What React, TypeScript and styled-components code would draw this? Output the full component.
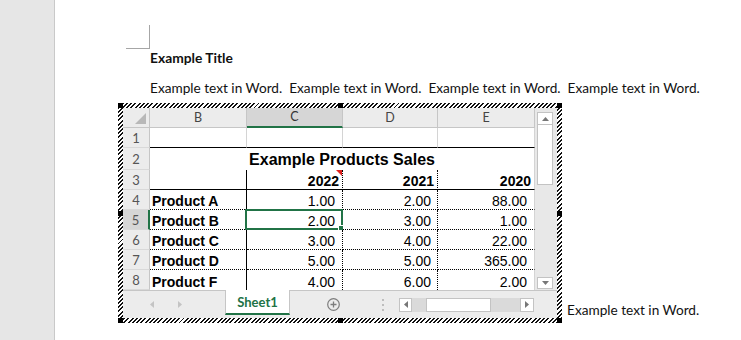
import React from 'react'
import styled, { createGlobalStyle } from 'styled-components'

const GlobalStyle = createGlobalStyle`
  html, body {
    margin: 0;
    padding: 0;
    background: #ffffff;
  }
  body {
    font-family: Lato, "Liberation Sans", sans-serif;
  }
`

const GREEN = '#217346'

type Line = 'none' | 'grid' | 'solid' | 'dot'

const lineCss = (l: Line) => {
  if (l === 'none') return 'none'
  if (l === 'solid') return '1px solid #000'
  if (l === 'dot') return '1px dotted #000'
  return '1px solid #d4d4d4'
}

const Screen = styled.div`
  display: flex;
  width: 741px;
  height: 340px;
  overflow: hidden;
`

const Gutter = styled.div`
  width: 54px;
  flex: none;
  background: #e6e6e6;
  border-right: 1px solid #c9c9c9;
`

const Page = styled.div`
  flex: 1;
  background: #fff;
  overflow: hidden;
`

const Column = styled.div`
  display: flex;
  flex-direction: column;
  align-items: flex-start;
  padding-left: 95px;
`

const MarginMark = styled.div`
  width: 23px;
  height: 23px;
  margin-top: 25px;
  margin-left: -24px;
  border-right: 1px solid #a6a6a6;
  border-bottom: 1px solid #a6a6a6;
`

const Title = styled.div`
  font: 700 13.8px/18px Lato, "Liberation Sans", sans-serif;
  color: #111;
`

const BodyText = styled.div`
  margin-top: 12px;
  font: 400 13.65px/18px Lato, "Liberation Sans", sans-serif;
  color: #111;
  white-space: pre;
`

const ObjectLine = styled.div`
  display: flex;
  align-items: flex-end;
  margin-top: 6px;
  margin-left: -32px;
`

const TrailText = styled(BodyText)`
  margin: 0 0 4px 5px;
`

const OleFrame = styled.div`
  position: relative;
  padding: 5px;
  background: repeating-linear-gradient(135deg, #111 0 1.4px, #fff 1.4px 3px);
`

const Handle = styled.div<{ $x: string; $y: string }>`
  position: absolute;
  width: 5px;
  height: 5px;
  background: #000;
  left: ${(p) => p.$x};
  top: ${(p) => p.$y};
`

const Workbook = styled.div`
  width: 434px;
  height: 210px;
  background: #fff;
  display: flex;
  flex-direction: column;
`

const SheetRow = styled.div`
  display: flex;
  height: 182px;
`

const Grid = styled.div`
  display: grid;
  grid-template-columns: 27px 97px 96px 95px 97px;
  grid-template-rows: 20px 20px 22px repeat(6, 20px);
  width: 412px;
`

const Corner = styled.div`
  background: #ececec;
  border-right: 1px solid #c6c6c6;
  border-bottom: 1px solid #c6c6c6;
  display: flex;
  align-items: flex-end;
  justify-content: flex-end;
  padding: 0 3px 3px 0;
`

const CornerTri = styled.div`
  width: 11px;
  height: 11px;
  background: #b8b8b8;
  clip-path: polygon(100% 0, 100% 100%, 0 100%);
`

const ColHead = styled.div<{ $sel?: boolean }>`
  background: ${(p) => (p.$sel ? '#d6d6d6' : '#ececec')};
  border-right: 1px solid #c6c6c6;
  border-bottom: ${(p) => (p.$sel ? `2px solid ${GREEN}` : '1px solid #c6c6c6')};
  display: flex;
  align-items: center;
  justify-content: center;
  font: 400 12.5px/16px Lato, "Liberation Sans", sans-serif;
  color: ${(p) => (p.$sel ? '#333' : '#444')};
`

const RowHead = styled.div<{ $sel?: boolean }>`
  background: ${(p) => (p.$sel ? '#d6d6d6' : '#ececec')};
  border-right: ${(p) => (p.$sel ? `2px solid ${GREEN}` : '1px solid #c6c6c6')};
  border-bottom: 1px solid #d9d9d9;
  display: flex;
  align-items: center;
  justify-content: center;
  font: 400 13px/16px Lato, "Liberation Sans", sans-serif;
  color: #555;
`

const Cell = styled.div<{
  $r?: Line
  $b?: Line
  $align?: 'left' | 'right' | 'center'
  $bold?: boolean
  $pad?: number
  $span?: number
  $size?: number
}>`
  position: relative;
  display: flex;
  align-items: flex-end;
  justify-content: ${(p) =>
    p.$align === 'right' ? 'flex-end' : p.$align === 'center' ? 'center' : 'flex-start'};
  grid-column: span ${(p) => p.$span ?? 1};
  border-right: ${(p) => lineCss(p.$r ?? 'grid')};
  border-bottom: ${(p) => lineCss(p.$b ?? 'grid')};
  padding: 0 ${(p) => p.$pad ?? 3}px 0 ${(p) => (p.$align === 'left' ? 2 : 0)}px;
  font: ${(p) => (p.$bold ? 700 : 400)} ${(p) => p.$size ?? 14}px/16px "Liberation Sans", Arial, sans-serif;
  color: #000;
  white-space: nowrap;
  background: #fff;
`

const TitleCell = styled(Cell)`
  padding-bottom: 1.5px;
  line-height: 18px;
`

const CommentMark = styled.div`
  position: absolute;
  top: 0;
  right: 0;
  width: 6px;
  height: 6px;
  background: #e0201c;
  clip-path: polygon(0 0, 100% 0, 100% 100%);
`

const Selection = styled.div`
  position: absolute;
  left: -2px;
  top: -1px;
  right: -1px;
  bottom: -1px;
  border: 2px solid ${GREEN};
`

const FillHandle = styled.div`
  position: absolute;
  right: -4px;
  bottom: -4px;
  width: 5px;
  height: 5px;
  background: ${GREEN};
  border: 1px solid #fff;
`

const VScroll = styled.div`
  width: 22px;
  background: #e8e8e8;
  display: flex;
  flex-direction: column;
  padding: 4px 4px 1px 2px;
  box-sizing: border-box;
`

const ScrollBtn = styled.div<{ $w?: number; $h?: number }>`
  width: ${(p) => p.$w ?? 16}px;
  height: ${(p) => p.$h ?? 13}px;
  box-sizing: border-box;
  background: #fff;
  border: 1px solid #c3c3c3;
  display: flex;
  align-items: center;
  justify-content: center;
  flex: none;
`

const VThumb = styled.div`
  height: 61px;
  margin-top: -1px;
  background: #fff;
  border: 1px solid #c3c3c3;
  box-sizing: border-box;
`

const Spacer = styled.div`
  flex: 1;
`

const TabBar = styled.div`
  height: 28px;
  box-sizing: border-box;
  border-top: 1px solid #c6c6c6;
  background: #ececec;
  display: flex;
  align-items: center;
`

const NavBox = styled.div`
  width: 102px;
  display: flex;
  align-items: center;
  gap: 24px;
  padding-left: 27px;
  box-sizing: border-box;
`

const SheetTab = styled.div`
  align-self: flex-start;
  margin-top: -1px;
  width: 65px;
  height: 25px;
  box-sizing: border-box;
  background: #fff;
  border-left: 1px solid #c6c6c6;
  border-right: 1px solid #c6c6c6;
  border-bottom: 2px solid ${GREEN};
  display: flex;
  align-items: center;
  justify-content: center;
  font: 700 13px/16px Lato, "Liberation Sans", sans-serif;
  color: ${GREEN};
`

const PlusBtn = styled.div`
  margin-left: 37px;
  width: 13px;
  height: 13px;
  display: flex;
`

const Dots = styled.div`
  margin-left: 42px;
  display: flex;
  flex-direction: column;
  gap: 3px;
`

const Dot = styled.div`
  width: 2px;
  height: 2px;
  background: #bdbdbd;
`

const HScroll = styled.div`
  margin-left: 15px;
  display: flex;
  align-items: center;
`

const HTrack = styled.div`
  width: 108px;
  height: 14px;
  background: #dadada;
  display: flex;
`

const HThumb = styled.div`
  margin-left: 14px;
  width: 65px;
  height: 14px;
  box-sizing: border-box;
  background: #fff;
  border: 1px solid #c3c3c3;
`

const Tri = ({ dir, color = '#777' }: { dir: 'up' | 'down' | 'left' | 'right'; color?: string }) => {
  const pts = {
    up: '0,4 3.5,0 7,4',
    down: '0,0 7,0 3.5,4',
    left: '4,0 4,7 0,3.5',
    right: '0,0 4,3.5 0,7',
  }[dir]
  const vertical = dir === 'up' || dir === 'down'
  return (
    <svg width={vertical ? 7 : 4} height={vertical ? 4 : 7} viewBox={vertical ? '0 0 7 4' : '0 0 4 7'}>
      <polygon points={pts} fill={color} />
    </svg>
  )
}

const cols = ['B', 'C', 'D', 'E']

const products: [string, string, string, string][] = [
  ['Product A', '1.00', '2.00', '88.00'],
  ['Product B', '2.00', '3.00', '1.00'],
  ['Product C', '3.00', '4.00', '22.00'],
  ['Product D', '5.00', '5.00', '365.00'],
  ['Product F', '4.00', '6.00', '2.00'],
]

const Sheet: React.FC = () => (
  <Grid>
    <Corner>
      <CornerTri />
    </Corner>
    {cols.map((c) => (
      <ColHead key={c} $sel={c === 'C'}>
        {c}
      </ColHead>
    ))}

    <RowHead>1</RowHead>
    {cols.map((c) => (
      <Cell key={c} $b="solid" />
    ))}

    <RowHead>2</RowHead>
    <TitleCell $span={4} $b="none" $align="center" $bold $size={16} $pad={0}>
      Example Products Sales
    </TitleCell>

    <RowHead>3</RowHead>
    <Cell $r="solid" $b="solid" />
    <Cell $r="dot" $b="solid" $align="right" $bold $pad={3}>
      2022
      <CommentMark />
    </Cell>
    <Cell $r="dot" $b="solid" $align="right" $bold $pad={3}>
      2021
    </Cell>
    <Cell $b="solid" $align="right" $bold $pad={3}>
      2020
    </Cell>

    {products.map(([name, a, b, c], i) => {
      const rowNo = i + 4
      const bottom: Line = i === products.length - 1 ? 'none' : 'dot'
      const selected = rowNo === 5
      return (
        <React.Fragment key={name}>
          <RowHead $sel={selected}>{rowNo}</RowHead>
          <Cell $r="solid" $b={bottom} $align="left" $bold>
            {name}
          </Cell>
          <Cell $r="dot" $b={bottom} $align="right" $pad={7}>
            {a}
            {selected && (
              <Selection>
                <FillHandle />
              </Selection>
            )}
          </Cell>
          <Cell $r="dot" $b={bottom} $align="right" $pad={6}>
            {b}
          </Cell>
          <Cell $b={bottom} $align="right" $pad={7}>
            {c}
          </Cell>
        </React.Fragment>
      )
    })}
  </Grid>
)

const App: React.FC = () => (
  <>
    <GlobalStyle />
    <Screen>
      <Gutter />
      <Page>
        <Column>
          <MarginMark />
          <Title>Example Title</Title>
          <BodyText>
            {'Example text in Word.  Example text in Word.  Example text in Word.  Example text in Word.'}
          </BodyText>
          <ObjectLine>
            <OleFrame>
              <Handle $x="0px" $y="0px" />
              <Handle $x="220px" $y="0px" />
              <Handle $x="calc(100% - 5px)" $y="0px" />
              <Handle $x="0px" $y="108px" />
              <Handle $x="calc(100% - 5px)" $y="108px" />
              <Handle $x="0px" $y="calc(100% - 5px)" />
              <Handle $x="220px" $y="calc(100% - 5px)" />
              <Handle $x="calc(100% - 5px)" $y="calc(100% - 5px)" />
              <Workbook>
                <SheetRow>
                  <Sheet />
                  <VScroll>
                    <ScrollBtn>
                      <Tri dir="up" />
                    </ScrollBtn>
                    <VThumb />
                    <Spacer />
                    <ScrollBtn $h={12}>
                      <Tri dir="down" />
                    </ScrollBtn>
                  </VScroll>
                </SheetRow>
                <TabBar>
                  <NavBox>
                    <Tri dir="left" color="#c4c4c4" />
                    <Tri dir="right" color="#c4c4c4" />
                  </NavBox>
                  <SheetTab>Sheet1</SheetTab>
                  <PlusBtn>
                    <svg width="13" height="13" viewBox="0 0 13 13">
                      <circle cx="6.5" cy="6.5" r="5.8" fill="none" stroke="#7d7d7d" strokeWidth="1.2" />
                      <path d="M6.5 3.5v6M3.5 6.5h6" stroke="#7d7d7d" strokeWidth="1.3" />
                    </svg>
                  </PlusBtn>
                  <Dots>
                    <Dot />
                    <Dot />
                    <Dot />
                  </Dots>
                  <HScroll>
                    <ScrollBtn $w={13} $h={14}>
                      <Tri dir="left" />
                    </ScrollBtn>
                    <HTrack>
                      <HThumb />
                    </HTrack>
                    <ScrollBtn $w={14} $h={14}>
                      <Tri dir="right" />
                    </ScrollBtn>
                  </HScroll>
                </TabBar>
              </Workbook>
            </OleFrame>
            <TrailText>Example text in Word.</TrailText>
          </ObjectLine>
        </Column>
      </Page>
    </Screen>
  </>
)

export default App
